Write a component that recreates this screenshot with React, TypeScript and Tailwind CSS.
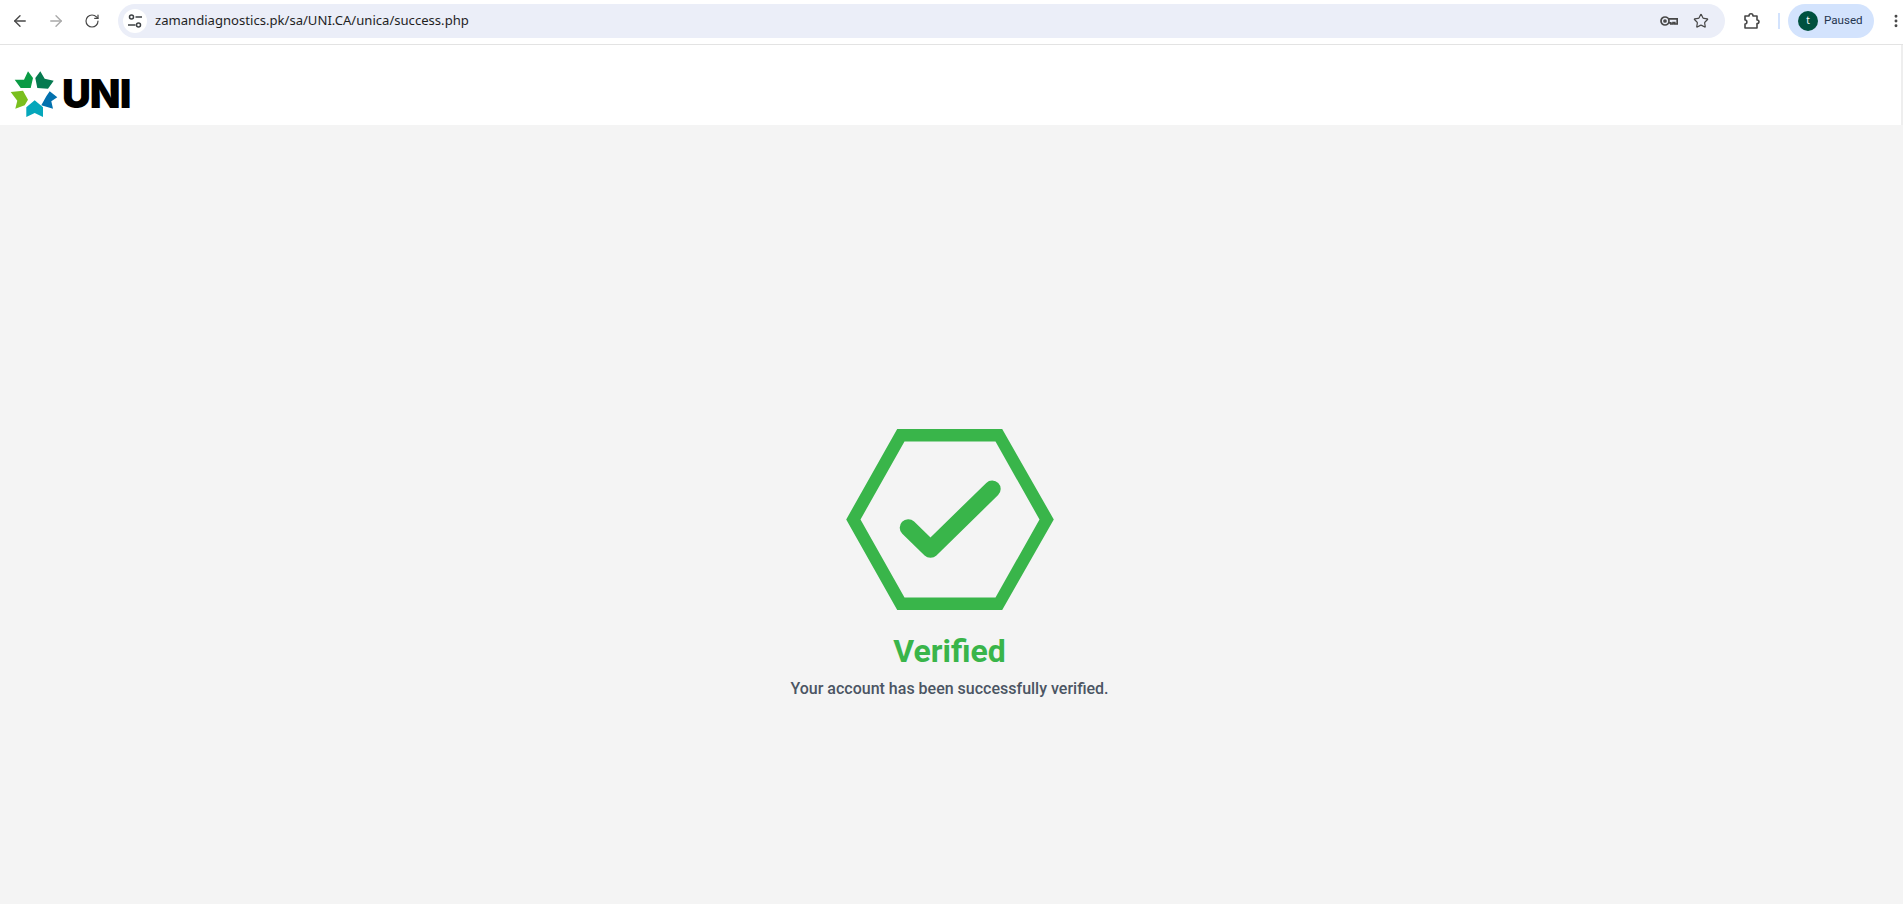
import React from "react";
import { ArrowLeft, ArrowRight, RotateCw, Star, MoreVertical } from "lucide-react";

// Site settings ("tune") icon in the address bar
const TuneIcon = () => (
  <svg width="16" height="16" viewBox="0 0 16 16" fill="none" stroke="#3c4043" strokeWidth="1.5">
    <circle cx="4.5" cy="4" r="2" />
    <path d="M8.5 4H15" />
    <circle cx="11.5" cy="12" r="2" />
    <path d="M1 12h7.5" />
  </svg>
);

const KeyIcon = () => (
  <svg width="18" height="12" viewBox="0 0 18 12" fill="none" stroke="#474747" strokeWidth="1.7" className="shrink-0">
    <circle cx="5" cy="6" r="4" />
    <circle cx="5" cy="6" r="1" />
    <path d="M9 3.800H17.200V9H14.800V7.600H13V9H10.800V7.800H9" />
  </svg>
);

const PuzzleIcon = () => (
  <svg width="18" height="18" viewBox="0 0 18 18" fill="none" stroke="#474747" strokeWidth="1.6" strokeLinejoin="round" className="shrink-0">
    <path d="M2 4h4c0-3 4-3 4 0h4v4c2.600 0 2.600 3.500 0 3.500V16H2v-4c2.500 0 2.500-4 0-4z" />
  </svg>
);

const UniLogo = () => (
  <div className="flex items-center">
    <svg width="50" height="48" viewBox="10 70 50 48">
      <polygon fill="#0a9b45" points="14.7,79.700 24,79.700 28,71.300 33,78 30.700,88 20.700,88" />
      <polygon fill="#067a50" points="40.300,71.300 44.700,78.700 53.700,80.700 48,88.700 37.300,88 35.300,78" />
      <polygon fill="#0271ae" points="49.700,91.300 57.300,97.300 51.300,101.300 53,108.700 41.300,105.300 46.300,96.300" />
      <polygon fill="#05a7bb" points="34.700,100.300 43,107.300 43,117 34.700,113 26.300,117 26.300,107.300" />
      <polygon fill="#7abf1e" points="10.700,92 23,90.700 28,99.700 24.700,105.300 15.300,108.700 17.300,100.700" />
    </svg>
    <span className="ml-[2px] font-['Inter',sans-serif] text-[40px] leading-none font-black text-black tracking-[-1px]">
      UNI
    </span>
  </div>
);

export default function App() {
  return (
    <div className="flex h-[904px] w-full flex-col overflow-hidden bg-[#f4f4f4]">
      {/* Browser toolbar */}
      <div className="flex h-[45px] shrink-0 items-center border-b border-[#e3e3e3] bg-white pb-[3px] pl-[2px]">
        <button className="flex w-9 shrink-0 justify-center text-[#474747]">
          <ArrowLeft size={18} strokeWidth={1.8} />
        </button>
        <button className="flex w-9 shrink-0 justify-center text-[#a9a9a9]">
          <ArrowRight size={18} strokeWidth={1.8} />
        </button>
        <button className="flex w-9 shrink-0 justify-center text-[#474747]">
          <RotateCw size={16} strokeWidth={1.8} />
        </button>

        <div className="ml-2 flex h-[34px] w-[1607px] shrink-0 items-center rounded-full bg-[#ebeef8] pl-[5px] pr-[16px]">
          <div className="flex h-6 w-6 items-center justify-center rounded-full bg-white">
            <TuneIcon />
          </div>
          <span className="ml-[8px] flex-1 font-['Noto_Sans',sans-serif] text-[13.100px] text-[#1f1f1f]">
            zamandiagnostics.pk/sa/UNI.CA/unica/success.php
          </span>
          <KeyIcon />
          <Star size={16} strokeWidth={1.8} className="ml-[15px] shrink-0 text-[#474747]" />
        </div>

        <div className="ml-[18px] flex w-[18px] shrink-0 justify-center">
          <PuzzleIcon />
        </div>
        <div className="ml-[17px] h-4 w-[2px] shrink-0 bg-[#d3e3fd]" />
        <div className="ml-[8px] flex h-[34px] w-[86px] shrink-0 items-center rounded-full bg-[#d3e3fd] pl-[10px]">
          <div className="flex h-5 w-5 items-center justify-center rounded-full bg-[#00513f] font-['Noto_Sans',sans-serif] text-[10px] text-white">
            t
          </div>
          <span className="ml-[6px] font-['Roboto',sans-serif] text-[11.600px] text-[#24354f]">Paused</span>
        </div>
        <div className="ml-[15px] flex w-[14px] shrink-0 justify-center text-[#474747]">
          <MoreVertical size={16} strokeWidth={2.4} className="shrink-0" />
        </div>
      </div>

      {/* Site header */}
      <header className="flex h-[80px] shrink-0 items-center border-r-2 border-[#eeeeee] bg-white pl-[10px] pt-[18px]">
        <UniLogo />
      </header>

      {/* Verified message */}
      <main className="flex flex-1 flex-col items-center pr-[4px] pt-[304px]">
        <svg width="210" height="182" viewBox="844 429 210 182">
          <path
            fill="#39b54a"
            fillRule="evenodd"
            d="M845.200 519.500L896.200 429H1001.200L1052.800 519.500L1001.200 610H896.200ZM859.500 519.500L903.500 597.500H994.500L1038.500 519.500L994.500 441.500H903.500Z"
          />
          <path
            d="M907.200 527.700L929.500 549.300L991.200 489"
            fill="none"
            stroke="#39b54a"
            strokeWidth="17"
            strokeLinecap="round"
            strokeLinejoin="round"
          />
        </svg>
        <h1 className="mt-[22px] font-['Roboto',sans-serif] text-[32px] leading-9 font-bold text-[#39b54a]">
          Verified
        </h1>
        <p className="mt-[8px] font-['Roboto',sans-serif] text-base font-medium text-[#4b5563]">
          Your account has been successfully verified.
        </p>
      </main>
    </div>
  );
}
